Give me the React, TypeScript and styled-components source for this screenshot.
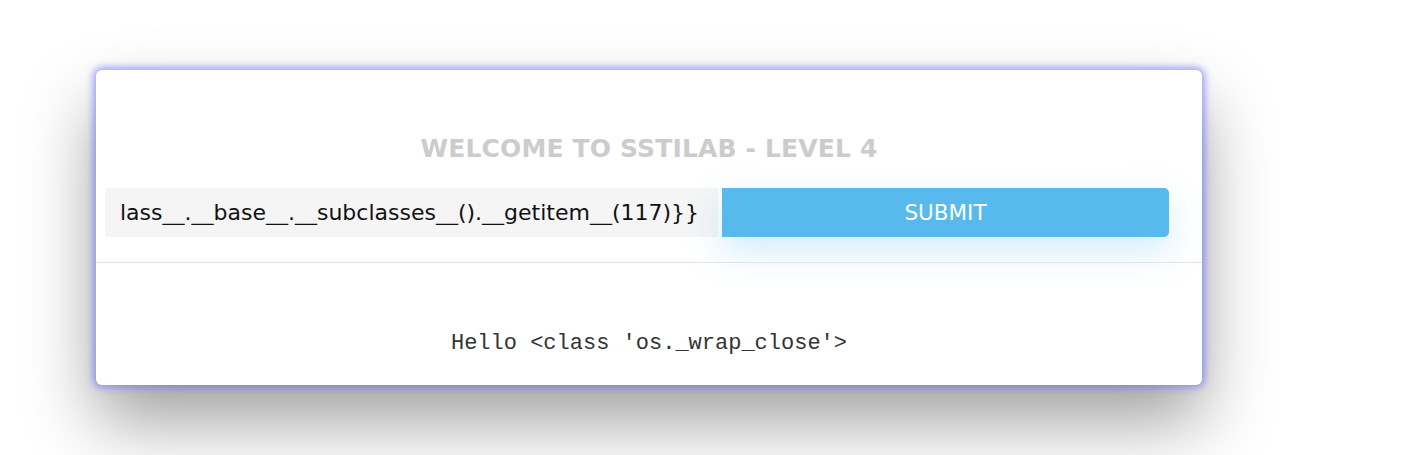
import styled, { createGlobalStyle } from 'styled-components';

const GlobalStyle = createGlobalStyle`
  html, body {
    margin: 0;
    padding: 0;
    background: #ffffff;
  }
  body {
    font-family: 'DejaVu Sans', sans-serif;
  }
`;

const StyledPage = styled.div`
  width: 1422px;
  height: 455px;
  overflow: hidden;
  padding: 70px 0 0 96px;
  box-sizing: border-box;
`;

const StyledCard = styled.div`
  width: 1106px;
  height: 315px;
  display: flex;
  flex-direction: column;
  background-color: #ffffff;
  border-radius: 6px;
  box-shadow:
    0 0 7px 3px rgba(110, 110, 255, 0.6),
    0 36px 70px rgba(0, 0, 0, 0.38);
`;

const StyledTitle = styled.h1`
  margin: 63px 0 0;
  font-family: 'DejaVu Sans', sans-serif;
  font-size: 25px;
  font-weight: 700;
  letter-spacing: 0.15px;
  line-height: 32px;
  text-align: center;
  color: #cccccc;
`;

const StyledForm = styled.form`
  display: flex;
  gap: 4px;
  width: 1064px;
  margin: 23px 0 0 9px;
`;

const StyledInput = styled.input`
  width: 613px;
  height: 49px;
  padding: 0 15px;
  box-sizing: border-box;
  border: none;
  outline: none;
  border-radius: 4px 0 0 4px;
  background-color: #f5f5f5;
  font-family: 'DejaVu Sans', sans-serif;
  font-size: 22px;
  color: #111111;
`;

const StyledButton = styled.button`
  flex: 1;
  height: 49px;
  border: none;
  border-radius: 0 5px 5px 0;
  background-color: #57b9ec;
  box-shadow: 0 14px 36px rgba(87, 185, 236, 0.28);
  font-family: 'DejaVu Sans', sans-serif;
  font-size: 21.5px;
  color: #ffffff;
  cursor: pointer;
`;

const StyledDivider = styled.hr`
  width: 100%;
  margin: 25px 0 0;
  border: none;
  border-top: 1px solid #e4e4e4;
`;

const StyledResult = styled.pre`
  margin: 68px 0 0;
  font-family: 'Liberation Mono', monospace;
  font-size: 22px;
  line-height: 26px;
  text-align: center;
  color: #333333;
`;

const App = () => (
  <StyledPage>
    <GlobalStyle />
    <StyledCard>
      <StyledTitle>WELCOME TO SSTILAB - LEVEL 4</StyledTitle>
      <StyledForm onSubmit={(e) => e.preventDefault()}>
        <StyledInput
          type="text"
          name="name"
          defaultValue="lass__.__base__.__subclasses__().__getitem__(117)}}"
        />
        <StyledButton type="submit">SUBMIT</StyledButton>
      </StyledForm>
      <StyledDivider />
      <StyledResult>Hello &lt;class 'os._wrap_close'&gt;</StyledResult>
    </StyledCard>
  </StyledPage>
);

export default App;
